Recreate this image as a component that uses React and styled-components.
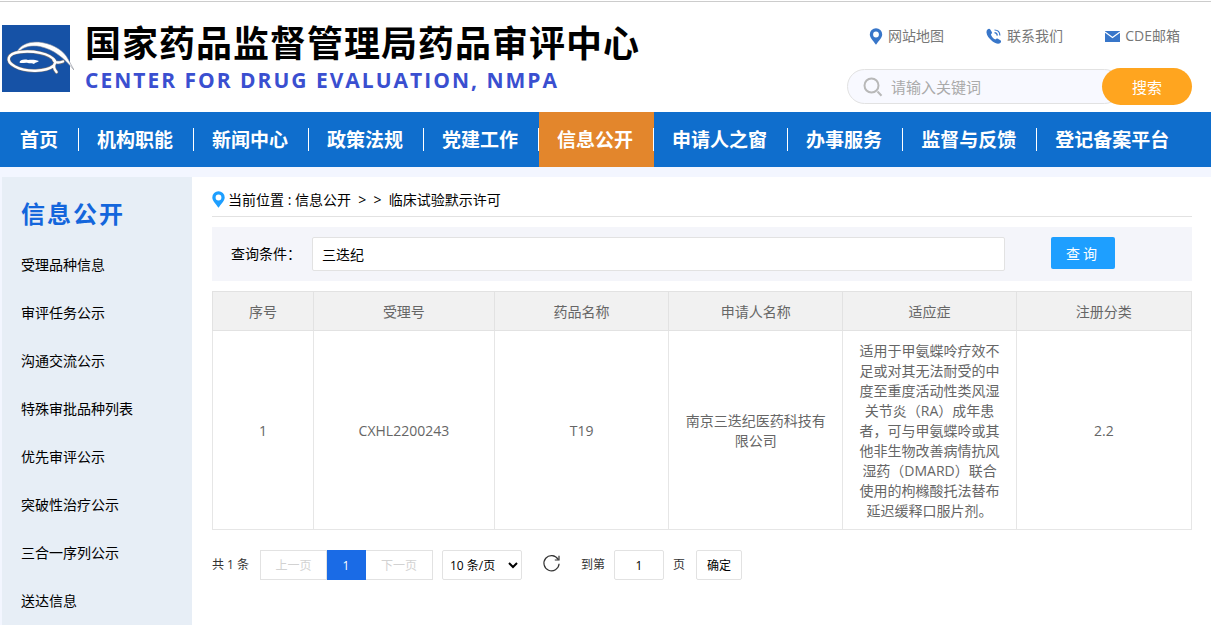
import { useState } from "react";
import styled, { createGlobalStyle } from "styled-components";

const GlobalStyle = createGlobalStyle`
  * {
    box-sizing: border-box;
  }

  body {
    margin: 0;
    background: #fff;
    color: #000;
    font-family: "Open Sans", "Noto Sans CJK SC", sans-serif;
    font-size: 14px;
  }

  h1, h2, p, ul {
    margin: 0;
    padding: 0;
  }

  ul {
    list-style: none;
  }

  a {
    color: inherit;
    text-decoration: none;
  }

  button, input, select {
    font-family: inherit;
    margin: 0;
  }
`;

const Page = styled.div`
  min-height: 100vh;
  display: flex;
  flex-direction: column;
  padding-top: 1px;
`;

const Header = styled.header`
  display: flex;
  justify-content: space-between;
  border-top: 1px solid #ccc;
  padding: 18px 19px 7px 2px;
`;

const Brand = styled.a`
  display: flex;
  gap: 11px;
`;

const Logo = styled.svg`
  display: block;
  width: 72px;
  height: 68px;
  margin-top: 5px;
  flex: none;
`;

const BrandText = styled.div`
  display: flex;
  flex-direction: column;
`;

const BrandTitle = styled.h1`
  font-family: "Noto Sans CJK SC", sans-serif;
  font-size: 36px;
  line-height: 42px;
  font-weight: 700;
  letter-spacing: 1px;
  white-space: nowrap;
`;

const BrandSubtitle = styled.p`
  color: #3a4fd0;
  font-family: "Open Sans", sans-serif;
  font-size: 21px;
  line-height: 36px;
  font-weight: 700;
  letter-spacing: 2px;
  white-space: nowrap;
`;

const HeaderTools = styled.div`
  width: 345px;
  display: flex;
  flex-direction: column;
  gap: 20px;
  padding-top: 4px;
`;

const QuickLinks = styled.ul`
  display: flex;
  justify-content: space-between;
  padding: 0 12px 0 22px;
`;

const QuickLink = styled.a`
  display: flex;
  align-items: center;
  gap: 5px;
  color: #777;
  font-size: 14px;
  line-height: 24px;

  svg {
    display: block;
    flex: none;
  }
`;

const SiteSearch = styled.form`
  display: flex;
  align-items: center;
`;

const SearchField = styled.label`
  flex: 1;
  min-width: 0;
  height: 35px;
  display: flex;
  align-items: center;
  gap: 8px;
  margin-right: -20px;
  padding: 0 20px 0 15px;
  border: 1px solid #e2e2e2;
  border-radius: 18px;
  background: #f8f9ff;
`;

const SearchInput = styled.input`
  flex: 1;
  min-width: 0;
  padding: 0;
  border: 0;
  outline: 0;
  background: none;
  font-size: 15px;

  &::placeholder {
    color: #aaa;
  }
`;

const SearchButton = styled.button`
  position: relative;
  width: 90px;
  height: 37px;
  border: 0;
  border-radius: 19px;
  background: #ffa51f;
  color: #fff;
  font-size: 15px;
`;

const Nav = styled.nav`
  background: #0f6ecd;
  border-bottom: 10px solid #f3f6ff;
  padding-left: 2px;
`;

const NavList = styled.ul`
  display: flex;
`;

const NavLink = styled.a`
  display: block;
  padding: 16px 0;
  background: ${(props) => (props.$active ? "#e3862c" : "transparent")};
  color: #fff;
  font-size: 19px;
  font-weight: 700;
  line-height: 25px;
  white-space: nowrap;
`;

const NavLabel = styled.span`
  display: block;
  height: 23px;
  padding: 0 20px 0 18px;
  border-right: 1px solid ${(props) => (props.$last ? "transparent" : "#fff")};
`;

const Body = styled.div`
  flex: 1;
  display: flex;
  border-left: 2px solid #f3f6ff;
`;

const Sidebar = styled.aside`
  flex: none;
  width: 190px;
  padding: 21px 19px 0;
  background: #e7eef6;
`;

const SidebarTitle = styled.h2`
  color: #1466dc;
  font-size: 24px;
  line-height: 32px;
  letter-spacing: 2px;
  padding-bottom: 11px;
`;

const SidebarLink = styled.a`
  display: block;
  line-height: 48px;
  height: 48px;
`;

const Main = styled.main`
  flex: 1;
  min-width: 0;
  padding: 0 19px 0 20px;
`;

const Breadcrumb = styled.div`
  display: flex;
  align-items: center;
  gap: 3px;
  height: 40px;
  padding-top: 6px;
  border-bottom: 1px solid #e2e2e2;
  line-height: 20px;
  white-space: pre;

  svg {
    display: block;
    flex: none;
  }
`;

const QueryForm = styled.form`
  display: flex;
  align-items: flex-start;
  margin: 10px 0;
  padding: 10px 77px 10px 19px;
  background: #f4f5fa;
`;

const QueryLabel = styled.label`
  width: 81px;
  line-height: 34px;
`;

const QueryInput = styled.input`
  flex: 1;
  min-width: 0;
  height: 34px;
  padding: 0 9px;
  border: 1px solid #e2e2e2;
  border-radius: 2px;
  background: #fff;
  font-size: 14px;
`;

const QueryButton = styled.button`
  width: 64px;
  height: 32px;
  margin-left: 46px;
  padding: 0;
  border: 0;
  border-radius: 2px;
  background: #1e9fff;
  color: #fff;
  font-size: 14px;
  letter-spacing: 3px;
`;

const Table = styled.table`
  width: 100%;
  table-layout: fixed;
  border-collapse: collapse;
  color: #666;
  line-height: 20px;
  text-align: center;
`;

const Col = styled.col`
  width: ${(props) => props.$width};
`;

const Th = styled.th`
  padding: 10px 15px 8px;
  border: 1px solid #e2e2e2;
  background: #f1f1f1;
  font-weight: 400;
`;

const Td = styled.td`
  padding: 10px 15px 8px;
  border: 1px solid #e6e6e6;
`;

const Pagination = styled.div`
  display: flex;
  align-items: center;
  margin-top: 20px;
  color: #333;
  font-size: 12px;
  line-height: 30px;
  white-space: nowrap;
`;

const Total = styled.span`
  width: 48px;
`;

const PageButton = styled.button`
  height: 30px;
  width: ${(props) => (props.$current ? "39px" : "67px")};
  padding: 0;
  border: 1px solid ${(props) => (props.$current ? "#1a6be6" : "#e2e2e2")};
  background: ${(props) => (props.$current ? "#1a6be6" : "#fff")};
  color: ${(props) => (props.$current ? "#fff" : "#d2d2d2")};
  font-size: 12px;

  & + & {
    border-left: 0;
  }
`;

const PageSize = styled.select`
  width: 80px;
  height: 30px;
  margin-left: 9px;
  padding: 0 0 0 3px;
  border: 1px solid #e2e2e2;
  border-radius: 2px;
  background: #fff;
  color: #000;
  font-size: 12px;
`;

const RefreshButton = styled.button`
  display: flex;
  margin: 0 20px;
  padding: 0 0 4px;
  border: 0;
  background: none;
`;

const JumpLabel = styled.label`
  display: flex;
  gap: 9px;
`;

const JumpInput = styled.input`
  width: 50px;
  height: 30px;
  padding: 0;
  border: 1px solid #e2e2e2;
  border-radius: 2px;
  font-size: 12px;
  text-align: center;
`;

const JumpButton = styled.button`
  width: 46px;
  height: 30px;
  margin-left: 11px;
  padding: 0;
  border: 1px solid #e2e2e2;
  border-radius: 2px;
  background: #fff;
  color: #000;
  font-size: 12px;
`;

const LogoMark = () => (
  <Logo viewBox="0 0 72 68" aria-hidden="true">
    <rect width="68" height="67" fill="#1652a6" />
    <path
      d="M15 26.500C20 18 30 16 40 17.500C52 19.500 62 26 66 34L72 45C62 33 52 24.500 38 21.500C29 20 21 22 17 26.500Z"
      fill="#fff"
      stroke="#8a8f9a"
      strokeWidth="0.6"
    />
    <path
      d="M53 36C48 28 30 25.500 18 27C5 28.500 3 36 13 41.500C24 47.500 44 47 52 40.500M51.500 35C53.500 38.500 57 38 61 36.500M53 38C51 41 52 44 54.500 47"
      fill="none"
      stroke="#77767a"
      strokeWidth="3.600"
      strokeLinecap="round"
    />
    <path
      d="M53 36C48 28 30 25.500 18 27C5 28.500 3 36 13 41.500C24 47.500 44 47 52 40.500M51.500 35C53.500 38.500 57 38 61 36.500M53 38C51 41 52 44 54.500 47"
      fill="none"
      stroke="#fff"
      strokeWidth="2.400"
      strokeLinecap="round"
    />
    <path
      d="M17.500 37.500C17.500 35 22 34 26 35C29 34.500 33 34.500 37 36C35 38 33 37 32 39C30 37.500 28 39 26 38C23 37 20 39 17.500 37.500Z"
      fill="#fff"
    />
  </Logo>
);

const PinIcon = ({ width, height, color }) => (
  <svg width={width} height={height} viewBox="0 0 13 17" aria-hidden="true">
    <path
      fillRule="evenodd"
      fill={color}
      d="M6.500 0.300A6.200 6.200 0 0 0 0.300 6.500C0.300 10 4 13 6.500 16.800C9 13 12.700 10 12.700 6.500A6.200 6.200 0 0 0 6.500 0.300ZM6.500 3.600A2.900 2.900 0 1 1 6.500 9.400A2.900 2.900 0 1 1 6.500 3.600Z"
    />
  </svg>
);

const PhoneIcon = () => (
  <svg width="16" height="16" viewBox="0 0 16 16" aria-hidden="true">
    <path
      fill="#3876c9"
      d="M1.500 1.500C2.500 .6 3.600 .5 4.300 1.500L5.800 4C6.300 5 5.900 5.700 4.900 6.400C5.500 8.500 7.300 10.400 9.400 11.500C10.200 10.600 11 10.300 11.900 10.800L14.400 12.300C15.400 13 15.200 14 14.300 14.900C12.500 16.400 9.500 15.600 6.300 13.200C3 10.600 .7 7.200 .5 4.500C.4 3.200 .8 2.200 1.500 1.500Z"
    />
    <path
      d="M8.500 2C11.600 2 13.800 4.200 13.900 7.500M8.500 4.700C10.200 4.800 11.200 5.900 11.300 7.600"
      fill="none"
      stroke="#3876c9"
      strokeWidth="1.2"
    />
  </svg>
);

const MailIcon = () => (
  <svg width="15" height="11" viewBox="0 0 15 11" aria-hidden="true">
    <rect width="15" height="11" fill="#3876c9" />
    <path d="M0 1L7.500 6.500L15 1" fill="none" stroke="#fff" strokeWidth="1.200" />
  </svg>
);

const SearchIcon = () => (
  <svg width="20" height="20" viewBox="0 0 20 20" aria-hidden="true">
    <circle cx="8.500" cy="8.500" r="7" fill="none" stroke="#b8b8b8" strokeWidth="2" />
    <path d="M14.500 14.500L18.500 18.800" stroke="#b8b8b8" strokeWidth="2" />
  </svg>
);

const RefreshIcon = () => (
  <svg width="19" height="19" viewBox="0 0 19 19" aria-hidden="true">
    <path
      d="M16 5.200A7.600 7.600 0 1 0 17.100 9.800M17 1.800V6H12.800"
      fill="none"
      stroke="#333"
      strokeWidth="1.200"
    />
  </svg>
);

const navItems = [
  "首页",
  "机构职能",
  "新闻中心",
  "政策法规",
  "党建工作",
  "信息公开",
  "申请人之窗",
  "办事服务",
  "监督与反馈",
  "登记备案平台",
];

const sideItems = [
  "受理品种信息",
  "审评任务公示",
  "沟通交流公示",
  "特殊审批品种列表",
  "优先审评公示",
  "突破性治疗公示",
  "三合一序列公示",
  "送达信息",
];

const columns = [
  { title: "序号", width: "10.3%" },
  { title: "受理号", width: "18.5%" },
  { title: "药品名称", width: "17.8%" },
  { title: "申请人名称", width: "17.8%" },
  { title: "适应症", width: "17.7%" },
  { title: "注册分类", width: "17.9%" },
];

const rows = [
  [
    "1",
    "CXHL2200243",
    "T19",
    "南京三迭纪医药科技有限公司",
    "适用于甲氨蝶呤疗效不足或对其无法耐受的中度至重度活动性类风湿关节炎（RA）成年患者，可与甲氨蝶呤或其他非生物改善病情抗风湿药（DMARD）联合使用的枸橼酸托法替布延迟缓释口服片剂。",
    "2.2",
  ],
];

const SiteHeader = () => (
  <Header>
    <Brand href="#">
      <LogoMark />
      <BrandText>
        <BrandTitle>国家药品监督管理局药品审评中心</BrandTitle>
        <BrandSubtitle>CENTER FOR DRUG EVALUATION, NMPA</BrandSubtitle>
      </BrandText>
    </Brand>
    <HeaderTools>
      <QuickLinks>
        <li>
          <QuickLink href="#">
            <PinIcon width={14} height={17} color="#3876c9" />
            网站地图
          </QuickLink>
        </li>
        <li>
          <QuickLink href="#">
            <PhoneIcon />
            联系我们
          </QuickLink>
        </li>
        <li>
          <QuickLink href="#">
            <MailIcon />
            CDE邮箱
          </QuickLink>
        </li>
      </QuickLinks>
      <SiteSearch onSubmit={(e) => e.preventDefault()}>
        <SearchField>
          <SearchIcon />
          <SearchInput type="text" placeholder="请输入关键词" aria-label="请输入关键词" />
        </SearchField>
        <SearchButton type="submit">搜索</SearchButton>
      </SiteSearch>
    </HeaderTools>
  </Header>
);

const ResultTable = () => (
  <Table>
    <colgroup>
      {columns.map((column) => (
        <Col key={column.title} $width={column.width} />
      ))}
    </colgroup>
    <thead>
      <tr>
        {columns.map((column) => (
          <Th key={column.title}>{column.title}</Th>
        ))}
      </tr>
    </thead>
    <tbody>
      {rows.map((row) => (
        <tr key={row[0]}>
          {row.map((cell, i) => (
            <Td key={columns[i].title}>{cell}</Td>
          ))}
        </tr>
      ))}
    </tbody>
  </Table>
);

const Pager = () => {
  const [page, setPage] = useState("1");

  return (
    <Pagination>
      <Total>共 1 条</Total>
      <PageButton type="button" disabled>
        上一页
      </PageButton>
      <PageButton type="button" $current>
        1
      </PageButton>
      <PageButton type="button" disabled>
        下一页
      </PageButton>
      <PageSize aria-label="条/页" defaultValue="10">
        <option value="10">10 条/页</option>
        <option value="20">20 条/页</option>
        <option value="50">50 条/页</option>
      </PageSize>
      <RefreshButton type="button" aria-label="刷新">
        <RefreshIcon />
      </RefreshButton>
      <JumpLabel>
        到第
        <JumpInput type="text" value={page} onChange={(e) => setPage(e.target.value)} />
        页
      </JumpLabel>
      <JumpButton type="button">确定</JumpButton>
    </Pagination>
  );
};

export default function App() {
  const [keyword, setKeyword] = useState("三迭纪");

  return (
    <Page>
      <GlobalStyle />
      <SiteHeader />
      <Nav>
        <NavList>
          {navItems.map((item, i) => (
            <li key={item}>
              <NavLink href="#" $active={item === "信息公开"}>
                <NavLabel $last={i === navItems.length - 1}>{item}</NavLabel>
              </NavLink>
            </li>
          ))}
        </NavList>
      </Nav>
      <Body>
        <Sidebar>
          <SidebarTitle>信息公开</SidebarTitle>
          <ul>
            {sideItems.map((item) => (
              <li key={item}>
                <SidebarLink href="#">{item}</SidebarLink>
              </li>
            ))}
          </ul>
        </Sidebar>
        <Main>
          <Breadcrumb>
            <PinIcon width={13} height={17} color="#1e9fff" />
            <span>
              当前位置 : <a href="#">信息公开</a>
              {"  >  >  "}
              <a href="#">临床试验默示许可</a>
            </span>
          </Breadcrumb>
          <QueryForm onSubmit={(e) => e.preventDefault()}>
            <QueryLabel htmlFor="keyword">查询条件：</QueryLabel>
            <QueryInput
              id="keyword"
              type="text"
              value={keyword}
              onChange={(e) => setKeyword(e.target.value)}
            />
            <QueryButton type="submit">查询</QueryButton>
          </QueryForm>
          <ResultTable />
          <Pager />
        </Main>
      </Body>
    </Page>
  );
}
